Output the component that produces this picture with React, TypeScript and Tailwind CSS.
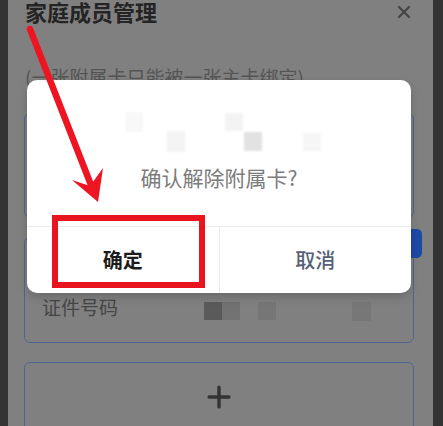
import { X, Plus } from "lucide-react"

const font = { fontFamily: '"Noto Sans CJK SC", "Noto Sans", sans-serif' }

// mosaic blocks over the masked card info inside the dialog
const maskBlocks = [
  { x: 98, y: 32, w: 18, h: 20, c: "bg-[#f8f8f8]" },
  { x: 140, y: 51, w: 18, h: 21, c: "bg-[#f3f3f3]" },
  { x: 198, y: 33, w: 18, h: 18, c: "bg-[#f3f3f3]" },
  { x: 217, y: 52, w: 18, h: 19, c: "bg-[#e2e2e2]" },
  { x: 276, y: 53, w: 18, h: 18, c: "bg-[#f6f6f6]" },
]

export default function App() {
  return (
    <div className="relative w-[443px] h-[426px] overflow-hidden flex" style={font}>
      <div className="w-[8px] shrink-0 bg-[#333333]" />

      <main className="flex-1 bg-[#808080] pl-[16px] pr-[19px] flex flex-col">
        <div className="shrink-0 flex justify-between items-start">
          <h1 className="ml-[1px] text-[22px] leading-[22px] font-bold text-[#242424]">家庭成员管理</h1>
          <X className="mt-[2px] w-[20px] h-[20px] text-[#454545]" strokeWidth={2.6} />
        </div>

        <p className="shrink-0 mt-[45px] ml-[1px] text-[19px] leading-[19px] text-[#555555]">(一张附属卡只能被一张主卡绑定)</p>

        <div className="shrink-0 mt-[27px] h-[105px] rounded-[6px] border border-[#4e6594]" />

        <div className="shrink-0 relative mt-[19px] h-[106px] rounded-[6px] border border-[#4e6594] px-[17px] pt-[14px]">
          <div className="absolute -top-[9px] -right-[9px] w-[30px] h-[29px] rounded-[5px] bg-[#1d4aa6]" />
          <div className="flex items-center h-[24px] text-[19px] text-[#454545]">姓名</div>
          <div className="mt-[19px] flex items-center h-[24px]">
            <span className="text-[19px] leading-[24px] text-[#454545]">证件号码</span>
            <div className="ml-[86px] mt-[9px] flex blur-[0.6px]">
              <div className="w-[18px] h-[18px] bg-[#5a5a5a]" />
              <div className="w-[18px] h-[18px] bg-[#727272]" />
              <div className="ml-[18px] w-[18px] h-[18px] bg-[#767676]" />
              <div className="ml-[76px] w-[19px] h-[19px] bg-[#777777]" />
            </div>
          </div>
        </div>

        <div className="shrink-0 mt-[19px] h-[80px] rounded-[6px] border border-[#4e6594] flex justify-center pt-[17px]">
          <Plus className="w-[34px] h-[34px] text-[#333333]" strokeWidth={2.4} />
        </div>
      </main>

      <div className="w-[10px] shrink-0 bg-[#333333]" />

      {/* confirm dialog */}
      <div className="absolute left-[27px] top-[80px] w-[384px] h-[213px] rounded-[10px] bg-white flex flex-col shadow-[0_4px_10px_rgba(0,0,0,0.18)]">
        <div className="h-[146px] flex flex-col items-center">
          <div className="relative w-full h-[72px] blur-[0.8px]">
            {maskBlocks.map((b, i) => (
              <div
                key={i}
                className={`absolute ${b.c}`}
                style={{ left: b.x, top: b.y, width: b.w, height: b.h }}
              />
            ))}
          </div>
          <p className="mt-[11px] text-[21px] leading-[28px] text-[#7b7b7b]">确认解除附属卡?</p>
        </div>
        <div className="flex flex-1 border-t border-[#ececec]">
          <button className="flex-1 flex items-center justify-center text-[20px] font-bold text-[#1c1c1c]">确定</button>
          <button className="flex-1 flex items-center justify-center text-[20px] font-medium text-[#566076] border-l border-[#ececec]">取消</button>
        </div>
      </div>

      {/* red callout box + arrow */}
      <div className="absolute left-[52px] top-[215px] w-[153px] h-[73px] border-[6px] border-[#e8141e]" />
      <svg className="absolute inset-0 pointer-events-none" width="443" height="426" viewBox="0 0 443 426">
        <line x1="30" y1="29" x2="91" y2="185" stroke="#ee1522" strokeWidth="6.5" strokeLinecap="round" />
        <polygon points="72,180 90,186 103,168 98,202" fill="#ee1522" />
      </svg>
    </div>
  )
}
